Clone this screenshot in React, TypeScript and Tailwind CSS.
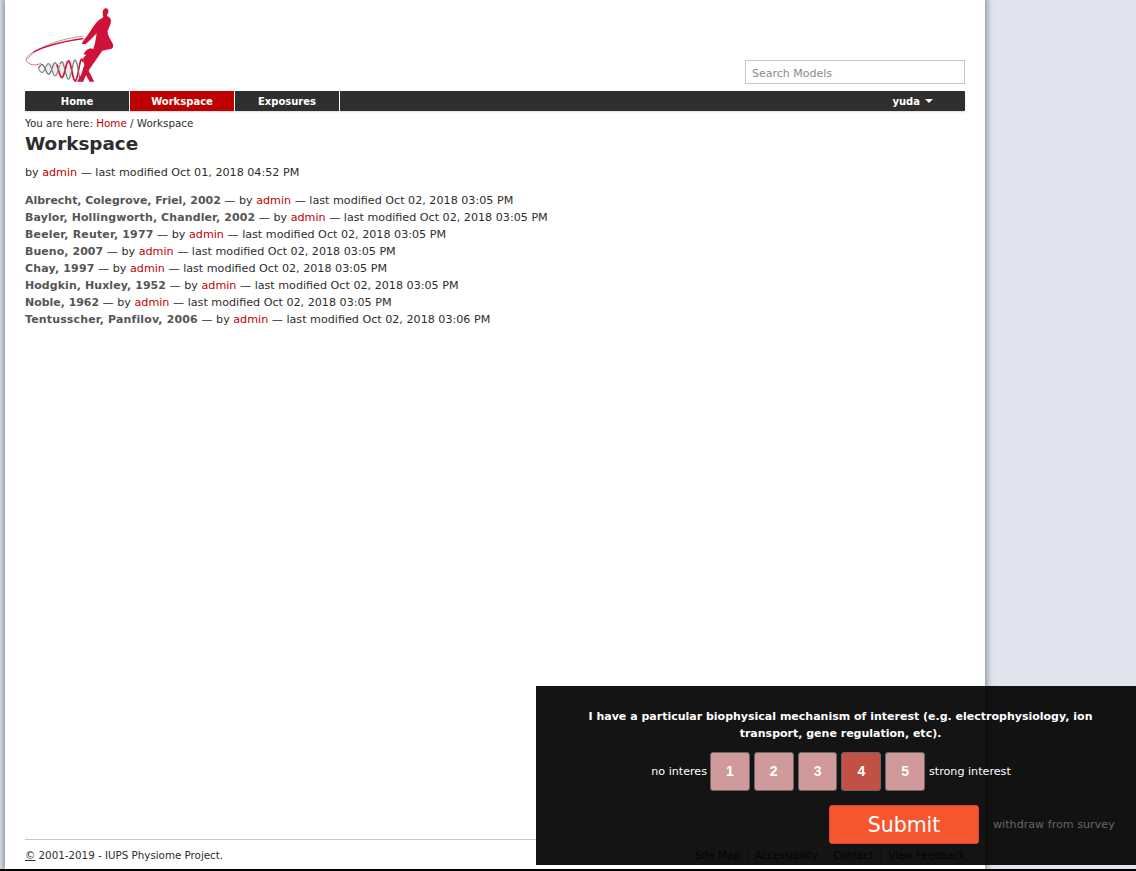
import React from "react";

const font = { fontFamily: '"DejaVu Sans", Verdana, sans-serif' };

function wave(from: number, to: number, phase: number) {
  const pts: string[] = [];
  for (let x = from; x <= to; x += 2) {
    const t = (x - 70) / 135;
    const amp = 10 + 26 * t;
    const y = 205 + 8 * t + amp * Math.sin((2 * Math.PI * (x - 70)) / 40 + phase);
    pts.push(`${x},${y.toFixed(1)}`);
  }
  return "M" + pts.join("L");
}

function Logo() {
  const rungs = [96, 102, 108, 114, 120, 126, 132, 138, 144, 150, 156, 162, 168, 174];
  return (
    <svg width="90" height="75" viewBox="30 24 270 225" fill="none" className="block">
      <path d="M37 178C60 145 125 118 205 108" stroke="#444" strokeWidth="1.500" />
      <path d="M205 115C150 122 90 135 52 158C40 166 32 172 34 182C42 196 62 198 78 190" stroke="#d9244e" strokeWidth="2" />
      <path d="M205 116C150 124 95 136 55 156" stroke="#cf1239" strokeWidth="4" />
      {rungs.map((x) => (
        <path key={x} d={`M${x} ${196 - (x - 70) / 6}V${216 + (x - 70) / 6}`} stroke="#b5b5b5" strokeWidth="1.500" />
      ))}
      <path d={wave(70, 125, 3.1)} stroke="#666" strokeWidth="3.500" />
      <path d={wave(125, 205, 3.1)} stroke="#cf1239" strokeWidth="5" />
      <path d={wave(70, 135, 0)} stroke="#888" strokeWidth="3.500" />
      <path d={wave(135, 198, 0)} stroke="#777" strokeWidth="3.500" />
      <path d="M268 26C275 22 282 27 280 36C279 41 276 44 276 48C282 50 288 55 288 62C288 72 282 82 278 92C277 102 282 112 290 125C296 135 296 142 290 146L262 152C250 170 235 190 222 210L210 232L205 245L186 245L198 225L208 195L205 180C203 175 207 170 214 165L205 162L215 150L225 145L235 147L240 130L245 100C235 110 222 125 212 132L200 132L205 122L222 100C232 85 240 70 252 60C258 55 264 53 265 50C262 44 262 30 268 26Z" fill="#cf1239" />
      <path d="M212 196L238 245L224 245L203 208Z" fill="#cf1239" />
    </svg>
  );
}

function Admin() {
  return <a className="text-[#c00000]">admin</a>;
}

const rows: [string, string, string][] = [
  ["Albrecht, Colegrove, Friel, 2002", "Oct 02, 2018 03:05 PM", ""],
  ["Baylor, Hollingworth, Chandler, 2002", "Oct 02, 2018 03:05 PM", "tracking-[0.14px]"],
  ["Beeler, Reuter, 1977", "Oct 02, 2018 03:05 PM", "tracking-[0.2px]"],
  ["Bueno, 2007", "Oct 02, 2018 03:05 PM", "tracking-[0.09px]"],
  ["Chay, 1997", "Oct 02, 2018 03:05 PM", "tracking-[0.2px]"],
  ["Hodgkin, Huxley, 1952", "Oct 02, 2018 03:05 PM", "tracking-[0.1px]"],
  ["Noble, 1962", "Oct 02, 2018 03:05 PM", ""],
  ["Tentusscher, Panfilov, 2006", "Oct 02, 2018 03:06 PM", "tracking-[0.18px]"],
];

export default function App() {
  return (
    <div style={font} className="relative h-[871px] w-[1136px] overflow-hidden bg-[#e1e4ee] text-[11.150px] text-[#2d2d2d]">
      <div className="ml-[5px] flex h-[869px] w-[980px] flex-col bg-white px-5 shadow-[0_0_6px_2px_rgba(80,85,110,0.6)]">
        <header className="flex h-[91px] items-end justify-between pb-[7px]">
          <div className="self-start pt-[8px]">
            <Logo />
          </div>
          <div className="flex h-6 w-[220px] items-center border border-[#c8c8c8] px-1.5 pt-[4px] text-[11px] text-[#8a8a8a]">Search Models</div>
        </header>

        <nav className="flex h-5 items-stretch rounded-[1px] bg-[#2f2f2f] pt-[1px] text-[10px] font-bold text-white shadow-[0_1px_2px_rgba(0,0,0,0.15)]">
          <a className="-mt-[1px] flex w-[105px] items-center justify-center border-r border-white pt-[1px]">Home</a>
          <a className="-mt-[1px] flex w-[105px] items-center justify-center border-r border-white bg-[#bf0000] pt-[1px]">Workspace</a>
          <a className="-mt-[1px] flex w-[105px] items-center justify-center border-r border-white pt-[1px]">Exposures</a>
          <div className="ml-auto flex items-center gap-[5px] pr-[32px]">
            yuda
            <span className="mb-px h-0 w-0 border-x-[4px] border-t-[4px] border-x-transparent border-t-white" />
          </div>
        </nav>

        <div className="mt-[5px] text-[10.350px] leading-[14px]">
          You are here: <a className="text-[#c00000]">Home</a> / Workspace
        </div>
        <h1 className="mt-[2px] text-[18.350px] leading-[24px] font-bold">Workspace</h1>
        <div className="mt-[10px] leading-[14px]">
          by <Admin /> — last modified Oct 01, 2018 04:52 PM
        </div>

        <ul className="mt-[12px] flex flex-col">
          {rows.map(([name, date, track]) => (
            <li key={name} className="h-[17px] leading-[17px]">
              <b className={`text-[10.950px] text-[#555555] ${track}`}>{name}</b> — by <Admin /> — last modified {date}
            </li>
          ))}
        </ul>

        <footer className="mt-auto flex h-[30px] items-center justify-between border-t border-[#c8c8c8] pt-[3px] text-[10.300px]">
          <span>
            <span className="underline">©</span> 2001-2019 - IUPS Physiome Project.
          </span>
          <div className="flex items-center text-[#2d2d2d]">
            <a className="border-r border-[#ccc] pr-[7px]">Site Map</a>
            <a className="border-r border-[#ccc] px-[7px]">Accessibility</a>
            <a className="border-r border-[#ccc] px-[7px]">Contact</a>
            <a className="pl-[7px]">View Feedback</a>
          </div>
        </footer>
      </div>
      <div className="h-[2px] bg-black" />

      <aside className="absolute top-[686px] left-[536px] flex h-[179px] w-[600px] flex-col items-center bg-[rgba(0,0,0,0.92)] text-white">
        <p className="mt-[22px] w-[520px] translate-x-[4.500px] text-center text-[11px] leading-[17px] font-bold">
          I have a particular biophysical mechanism of interest (e.g. electrophysiology, ion transport, gene regulation, etc).
        </p>
        <div className="mt-[10px] flex -translate-x-[5px] items-center justify-center">
          <span className="mr-[3px] pt-[2px]">no interes</span>
          <div className="flex gap-[4px]">
            {[1, 2, 3, 4, 5].map((n) => (
              <button
                key={n}
                className={`flex h-[39px] w-[39.800px] items-center justify-center rounded-[3px] border border-[#666] font-['Liberation_Sans'] text-[14px] font-bold text-white ${n === 4 ? "bg-[#c25045]" : "bg-[#cf9a99]"}`}
              >
                {n}
              </button>
            ))}
          </div>
          <span className="ml-[4px] pt-[2px]">strong interest</span>
        </div>
        <div className="mt-[14px] flex w-full items-center pl-[293px]">
          <button className="h-[39px] w-[150px] rounded-[3px] border border-[#e0442a] bg-[#f6562f] pt-[2px] text-[20.500px] text-white">Submit</button>
          <span className="ml-[14px] pt-[2px] text-[#666666]">withdraw from survey</span>
        </div>
      </aside>
    </div>
  );
}
